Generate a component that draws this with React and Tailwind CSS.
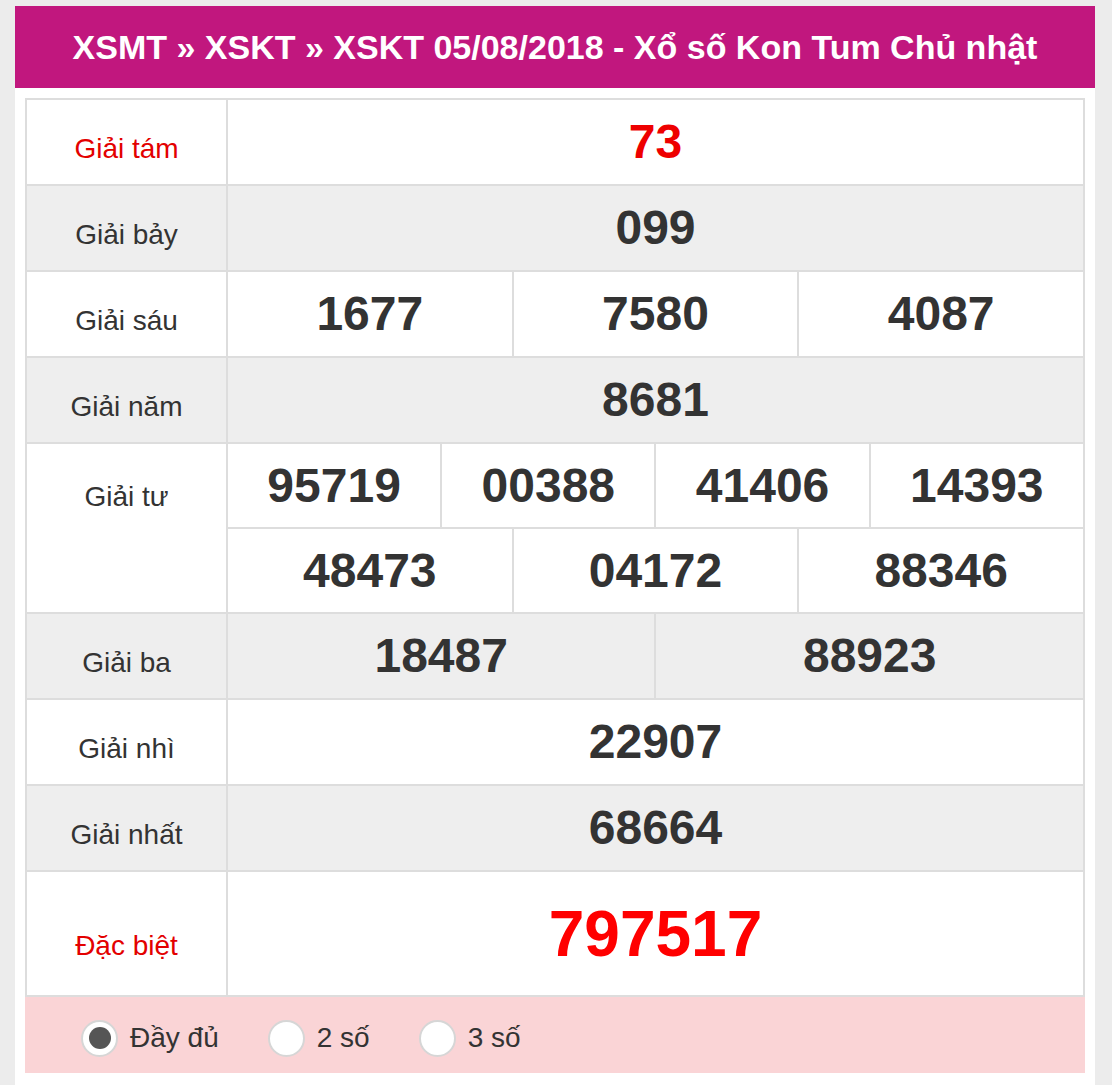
import { useState } from "react";

const rows = [
  { label: "Giải tám", nums: ["73"], red: true, bg: "bg-white" },
  { label: "Giải bảy", nums: ["099"], bg: "bg-[#eeeeee]" },
  { label: "Giải sáu", nums: ["1677", "7580", "4087"], bg: "bg-white" },
  { label: "Giải năm", nums: ["8681"], bg: "bg-[#eeeeee]" },
];

const rowsAfter = [
  { label: "Giải ba", nums: ["18487", "88923"], bg: "bg-[#eeeeee]" },
  { label: "Giải nhì", nums: ["22907"], bg: "bg-white" },
  { label: "Giải nhất", nums: ["68664"], bg: "bg-[#eeeeee]" },
];

const spans = { 1: 12, 2: 6, 3: 4, 4: 3 };

function NumCells({ nums, red }) {
  return nums.map((n, i) => (
    <td
      key={i}
      colSpan={spans[nums.length]}
      className={`border-2 border-[#dddddd] text-center align-middle font-bold text-[48px] leading-none ${
        red ? "text-[#ee0000]" : "text-[#333333]"
      }`}
    >
      {n}
    </td>
  ));
}

function PrizeRow({ row }) {
  return (
    <tr className={`h-[86px] ${row.bg}`}>
      <td
        className={`border-2 border-[#dddddd] text-center align-middle pt-[14px] text-[28px] ${
          row.red ? "text-[#e30000]" : "text-[#333333]"
        }`}
      >
        {row.label}
      </td>
      <NumCells nums={row.nums} red={row.red} />
    </tr>
  );
}

function Radio({ checked, label, onClick }) {
  return (
    <label className="flex items-center gap-[12px] cursor-pointer" onClick={onClick}>
      <span className="w-[37px] h-[37px] rounded-full bg-white border-2 border-[#d6d6d6] flex items-center justify-center">
        {checked && <span className="w-[22px] h-[22px] rounded-full bg-[#555555]" />}
      </span>
      <span className="text-[28px] text-[#333333]">{label}</span>
    </label>
  );
}

export default function App() {
  const [mode, setMode] = useState(0);

  return (
    <div
      className="min-h-screen bg-[#ececec] pt-[6px] pl-[15px]"
      style={{ fontFamily: '"Liberation Sans", Arial, sans-serif' }}
    >
      <div className="w-[1080px] bg-white pb-[12px]">
        <div className="h-[82px] bg-[#c1177e] flex items-center justify-center text-white font-bold text-[34px]">
          XSMT » XSKT » XSKT 05/08/2018 - Xổ số Kon Tum Chủ nhật
        </div>

        <div className="px-[10px] pt-[10px]">
          <table className="w-full table-fixed border-collapse">
            <colgroup>
              <col className="w-[201px]" />
              {Array.from({ length: 12 }).map((_, i) => (
                <col key={i} />
              ))}
            </colgroup>
            <tbody>
              {rows.map((r) => (
                <PrizeRow key={r.label} row={r} />
              ))}

              <tr className="h-[85px] bg-white">
                <td
                  rowSpan={2}
                  className="border-2 border-[#dddddd] text-center align-top pt-[32px] text-[28px] text-[#333333]"
                >
                  Giải tư
                </td>
                <NumCells nums={["95719", "00388", "41406", "14393"]} />
              </tr>
              <tr className="h-[85px] bg-white">
                <NumCells nums={["48473", "04172", "88346"]} />
              </tr>

              {rowsAfter.map((r) => (
                <PrizeRow key={r.label} row={r} />
              ))}

              <tr className="h-[125px] bg-white">
                <td className="border-2 border-[#dddddd] text-center align-middle pt-[24px] text-[28px] text-[#e30000]">
                  Đặc biệt
                </td>
                <td
                  colSpan={12}
                  className="border-2 border-[#dddddd] text-center align-middle font-bold text-[64px] leading-none text-[#ff0000]"
                >
                  797517
                </td>
              </tr>
            </tbody>
          </table>

          <div className="h-[76px] bg-[#fad4d6] flex items-center pt-[6px] pl-[56px] gap-[49px]">
            {["Đầy đủ", "2 số", "3 số"].map((l, i) => (
              <Radio key={l} label={l} checked={mode === i} onClick={() => setMode(i)} />
            ))}
          </div>
        </div>
      </div>
    </div>
  );
}
